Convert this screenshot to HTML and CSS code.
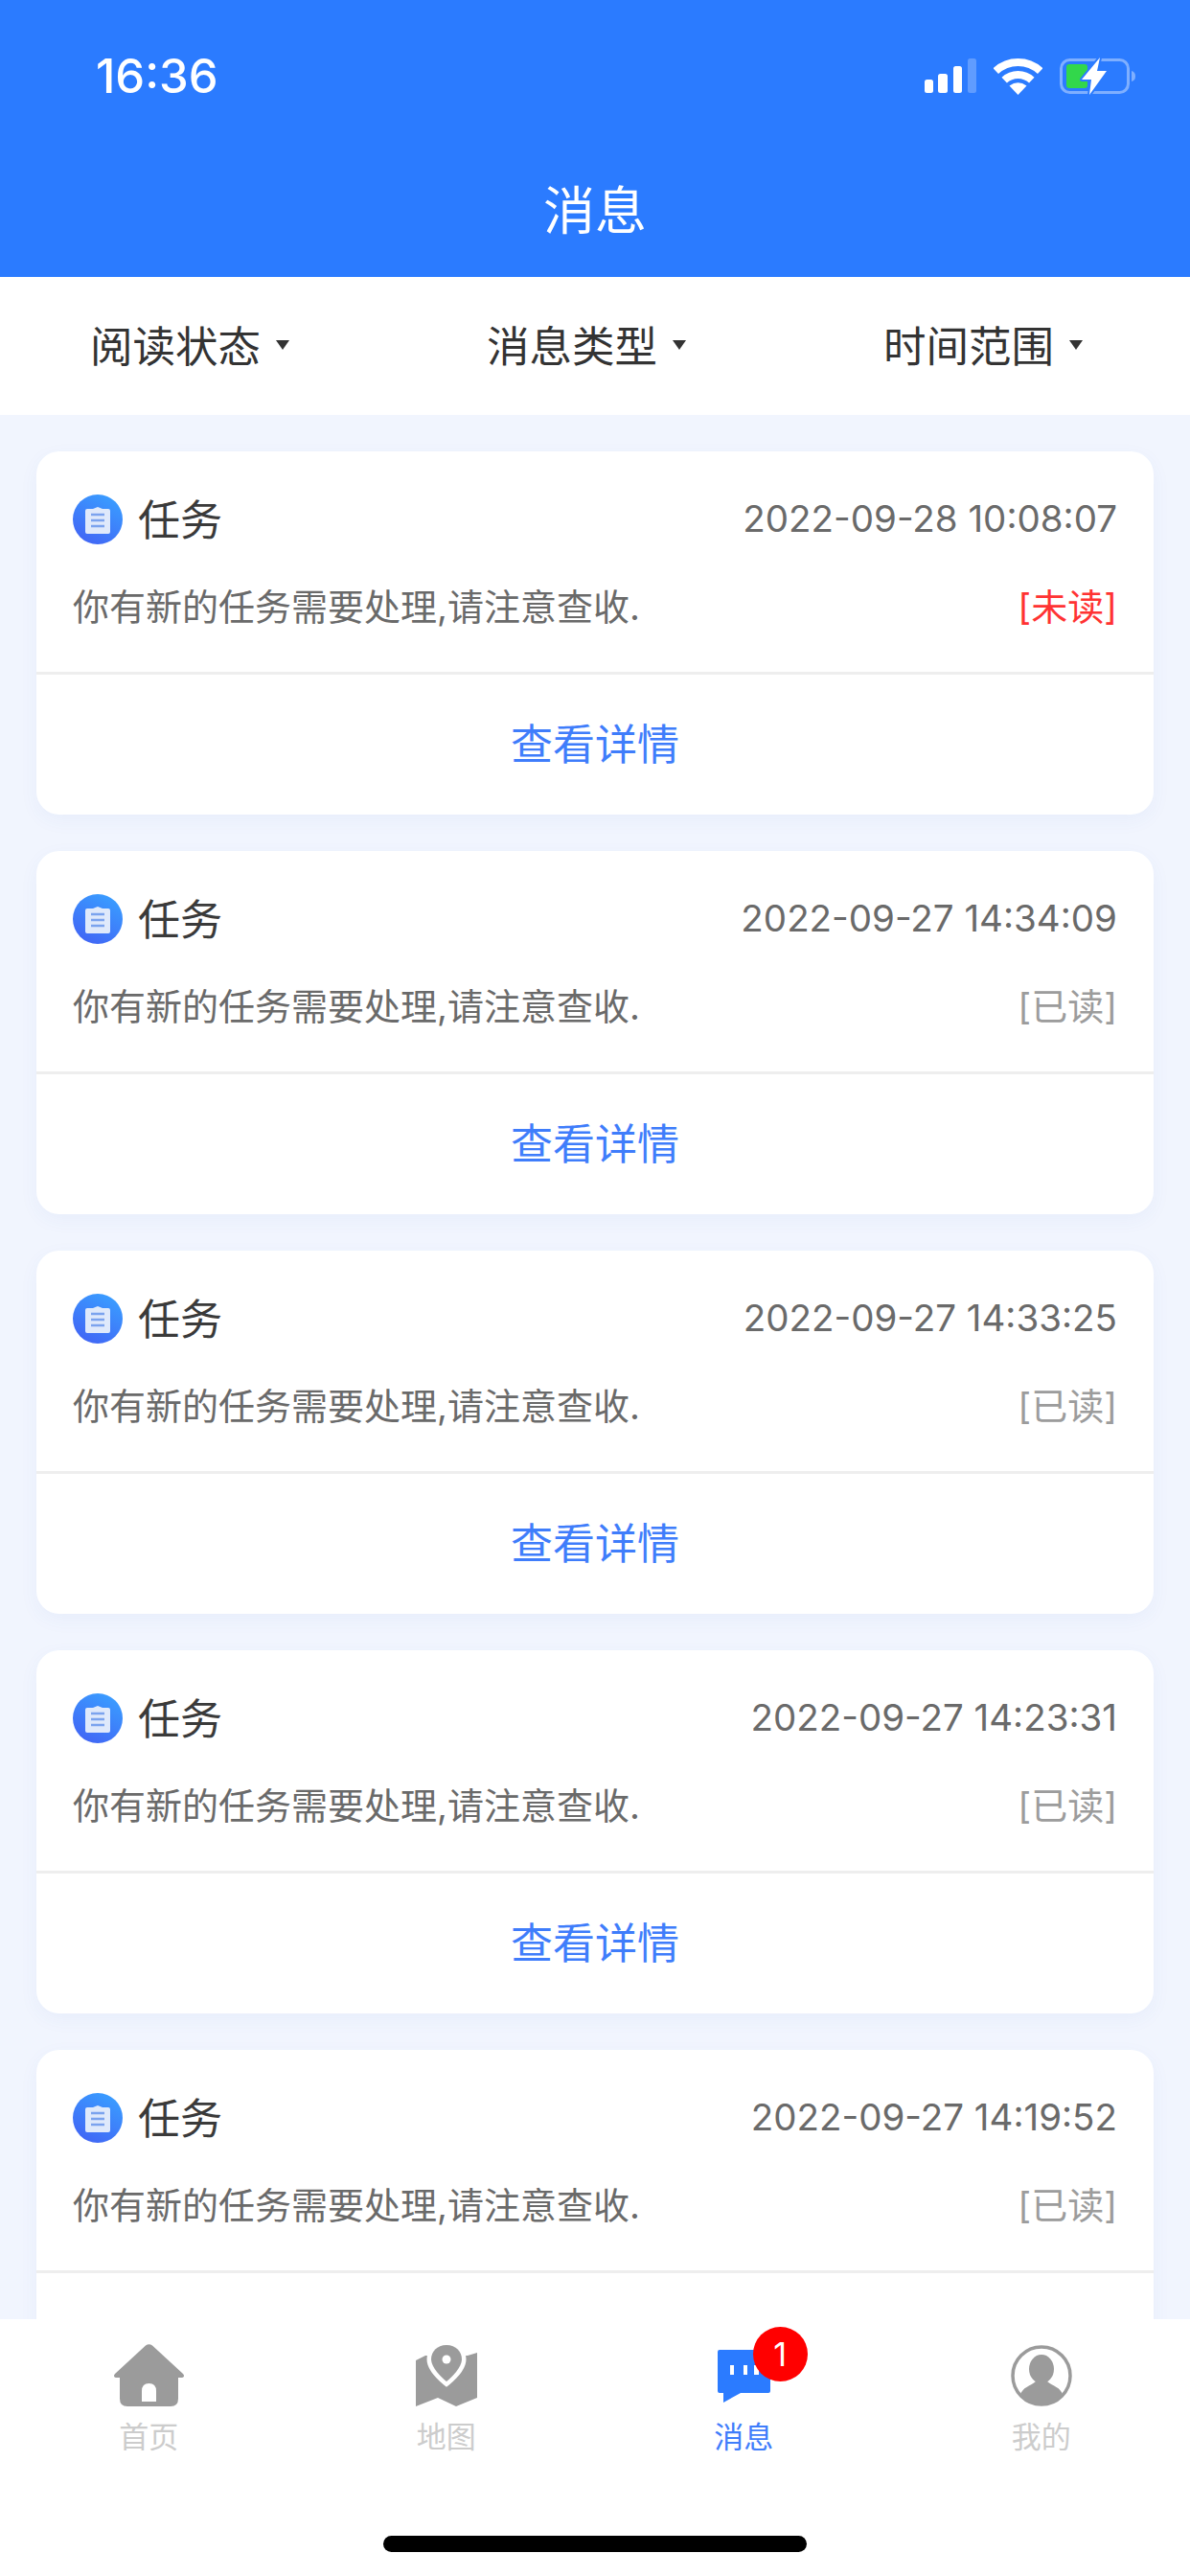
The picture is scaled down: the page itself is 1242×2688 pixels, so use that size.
FILE: index.html
```html
<!DOCTYPE html>
<html lang="zh-CN">
  <head>
    <meta charset="UTF-8" />
    <meta name="viewport" content="width=device-width, initial-scale=1.0" />
    <title>消息</title>
    <link rel="stylesheet" href="styles.css">
  </head>
  <body>
    <svg class="defs" width="0" height="0">
      <defs>
        <linearGradient id="taskBg" x1="0.8" y1="0.1" x2="0.3" y2="1">
          <stop offset="0" stop-color="#3a9bff" />
          <stop offset="1" stop-color="#4166f5" />
        </linearGradient>
        <symbol id="taskIcon" viewBox="0 0 52 52">
          <circle cx="26" cy="26" r="26" fill="url(#taskBg)" />
          <path d="M15 15h6l5-2 5 2h6q2 0 2 2v22q0 2-2 2H15q-2 0-2-2V17q0-2 2-2z" fill="#dfe9fb" />
          <path d="M19 21h14M19 27h14M19 33h14" stroke="#7ba3ee" stroke-width="2.6" />
        </symbol>
      </defs>
    </svg>

    <div class="page">
      <header class="header">
        <div class="status-bar">
          <span class="time">16:36</span>
          <div class="status-icons">
            <svg width="54" height="36" viewBox="0 0 54 36">
              <rect x="0" y="22" width="9" height="14" rx="2.5" fill="#fff" />
              <rect x="14" y="16" width="10" height="20" rx="2.5" fill="#fff" />
              <rect x="30" y="8" width="9" height="28" rx="2.5" fill="#fff" />
              <rect x="45" y="0" width="9" height="36" rx="2.5" fill="#fff" opacity="0.25" />
            </svg>
            <svg width="51" height="39" viewBox="0 0 51 39">
              <path d="M2.3 14.1A34 34 0 0 1 48.7 14.1M11.2 23.6A21 21 0 0 1 39.8 23.6" fill="none" stroke="#fff" stroke-width="8" />
              <path d="M25.5 39L16.5 29.5Q25.5 23 34.5 29.5Z" fill="#fff" />
            </svg>
            <svg width="80" height="41" viewBox="0 0 80 41">
              <rect x="1.5" y="3.5" width="70" height="34" rx="9" fill="none" stroke="#fff" stroke-opacity="0.4" stroke-width="3" />
              <path d="M75 15q4 1 4 5.500t-4 5.500z" fill="#fff" fill-opacity="0.4" />
              <rect x="7" y="8" width="22" height="25" rx="3" fill="#32d74b" />
              <path d="M42 1L23 24H33L31 40L49 15H39Z" fill="#fff" stroke="#2b7bff" stroke-width="4" paint-order="stroke" stroke-linejoin="round" />
            </svg>
          </div>
        </div>
        <h1 class="title">消息</h1>
      </header>

      <nav class="filters">
        <div class="filter">阅读状态<i class="caret"></i></div>
        <div class="filter">消息类型<i class="caret"></i></div>
        <div class="filter">时间范围<i class="caret"></i></div>
      </nav>

      <main class="list">
        <section class="card">
          <div class="card-top">
            <div class="row">
              <div class="kind"><svg class="kind-icon"><use href="#taskIcon" /></svg><span>任务</span></div>
              <span class="date">2022-09-28 10:08:07</span>
            </div>
            <div class="row msg-row">
              <span>你有新的任务需要处理,请注意查收.</span>
              <span class="unread">[未读]</span>
            </div>
          </div>
          <div class="detail">查看详情</div>
        </section>

        <section class="card">
          <div class="card-top">
            <div class="row">
              <div class="kind"><svg class="kind-icon"><use href="#taskIcon" /></svg><span>任务</span></div>
              <span class="date">2022-09-27 14:34:09</span>
            </div>
            <div class="row msg-row">
              <span>你有新的任务需要处理,请注意查收.</span>
              <span class="read">[已读]</span>
            </div>
          </div>
          <div class="detail">查看详情</div>
        </section>

        <section class="card">
          <div class="card-top">
            <div class="row">
              <div class="kind"><svg class="kind-icon"><use href="#taskIcon" /></svg><span>任务</span></div>
              <span class="date">2022-09-27 14:33:25</span>
            </div>
            <div class="row msg-row">
              <span>你有新的任务需要处理,请注意查收.</span>
              <span class="read">[已读]</span>
            </div>
          </div>
          <div class="detail">查看详情</div>
        </section>

        <section class="card">
          <div class="card-top">
            <div class="row">
              <div class="kind"><svg class="kind-icon"><use href="#taskIcon" /></svg><span>任务</span></div>
              <span class="date">2022-09-27 14:23:31</span>
            </div>
            <div class="row msg-row">
              <span>你有新的任务需要处理,请注意查收.</span>
              <span class="read">[已读]</span>
            </div>
          </div>
          <div class="detail">查看详情</div>
        </section>

        <section class="card">
          <div class="card-top">
            <div class="row">
              <div class="kind"><svg class="kind-icon"><use href="#taskIcon" /></svg><span>任务</span></div>
              <span class="date">2022-09-27 14:19:52</span>
            </div>
            <div class="row msg-row">
              <span>你有新的任务需要处理,请注意查收.</span>
              <span class="read">[已读]</span>
            </div>
          </div>
        </section>
      </main>

      <footer class="tabbar">
        <div class="tabs">
          <div class="tab">
            <div class="tab-icon">
              <svg width="73" height="65" viewBox="0 0 73 65">
                <path d="M33 1.500Q36.500-1 40 1.500L72 31Q74.500 34 71 35H67V57Q67 65 59 65H14Q6 65 6 57V35H2Q-1.500 34 1 31Z" fill="#9b9b9b" />
                <path d="M29 60V49Q29 41 36.500 41T44 49V60Z" fill="#fff" />
              </svg>
            </div>
            <span>首页</span>
          </div>
          <div class="tab">
            <div class="tab-icon">
              <svg width="64" height="64" viewBox="0 0 64 64">
                <path d="M0 16L10 11H54L64 8V55L42 64L23 55L0 64Z" fill="#9b9b9b" />
                <path d="M32 0C22 0 16 7 16 15C16 23 26 33 32 38C38 33 48 23 48 15C48 7 42 0 32 0Z" fill="#9b9b9b" stroke="#fff" stroke-width="9" paint-order="stroke" stroke-miterlimit="8" />
                <circle cx="32" cy="15" r="4.500" fill="#fff" />
              </svg>
            </div>
            <span>地图</span>
          </div>
          <div class="tab tab-active">
            <div class="tab-icon">
              <div class="msg-icon">
                <svg width="55" height="55" viewBox="0 0 55 55">
                  <path d="M2 0H53Q55 0 55 2V43Q55 45 53 45H24L6 55V45H2Q0 45 0 43V2Q0 0 2 0Z" fill="#2b7bff" />
                  <path d="M13 16h4v10h-4zM27 16h4v10h-4zM38 16h5v10h-5z" fill="#fff" />
                </svg>
                <b class="badge">1</b>
              </div>
            </div>
            <span>消息</span>
          </div>
          <div class="tab">
            <div class="tab-icon">
              <svg width="64" height="64" viewBox="0 0 64 64">
                <circle cx="32" cy="32" r="30" fill="none" stroke="#9b9b9b" stroke-width="3.500" />
                <ellipse cx="32" cy="25" rx="13" ry="15" fill="#9b9b9b" />
                <path d="M10 52C12 44 20 43 26 38H38C44 43 52 44 54 52C48 59 40 62 32 62C24 62 16 59 10 52Z" fill="#9b9b9b" />
              </svg>
            </div>
            <span>我的</span>
          </div>
        </div>
        <div class="home-bar"></div>
      </footer>
    </div>
  </body>
</html>
```

FILE: styles.css
```css
html,
body {
  margin: 0;
  padding: 0;
}
body {
  font-family: Inter, "Noto Sans CJK SC", sans-serif;
  color: #333;
  background-color: #fff;
}
.defs {
  display: block;
  height: 0;
}
.page {
  width: 1242px;
  height: 2688px;
  display: flex;
  flex-direction: column;
  overflow: hidden;
}

/* header */
.header {
  height: 289px;
  flex: none;
  background-color: #2b7bff;
  color: #fff;
}
.status-bar {
  height: 158px;
  box-sizing: border-box;
  padding: 0 56px 0 100px;
  display: flex;
  align-items: center;
  justify-content: space-between;
}
.time {
  font-size: 49px;
  font-weight: 500;
}
.status-icons {
  display: flex;
  align-items: center;
  gap: 18px;
}
.status-icons svg {
  display: block;
}
.title {
  margin: 0;
  height: 126px;
  line-height: 126px;
  font-size: 54px;
  font-weight: 400;
  text-align: center;
}

/* filters */
.filters {
  height: 144px;
  flex: none;
  display: grid;
  grid-template-columns: repeat(3, 1fr);
  background-color: #fff;
}
.filter {
  display: flex;
  align-items: center;
  justify-content: center;
  padding: 0 18px 5px 0;
  font-size: 44.5px;
  color: #333;
}
.caret {
  width: 0;
  height: 0;
  margin: 3px 0 0 16px;
  border-left: 7px solid transparent;
  border-right: 7px solid transparent;
  border-top: 10px solid #333;
}

/* message cards */
.list {
  flex: 1;
  min-height: 0;
  overflow: hidden;
  padding: 38px 38px 0;
  display: flex;
  flex-direction: column;
  gap: 38px;
  background-color: #f1f5fe;
}
.card {
  flex: none;
  height: 379px;
  background-color: #fff;
  border-radius: 24px;
  box-shadow: 0 6px 20px rgba(50, 90, 200, 0.05);
}
.card-top {
  height: 185px;
  padding: 45px 38px 0;
  border-bottom: 3px solid #eee;
}
.row {
  display: flex;
  align-items: center;
  justify-content: space-between;
  height: 52px;
}
.kind {
  display: flex;
  align-items: center;
  gap: 16px;
  font-size: 44px;
  color: #3a3a3a;
}
.kind span {
  padding-bottom: 4px;
}
.kind-icon {
  display: block;
  width: 52px;
  height: 52px;
}
.date {
  padding-bottom: 3px;
  font-size: 38.5px;
  color: #6a6a6a;
}
.msg-row {
  height: 56px;
  margin-top: 34px;
  font-size: 38px;
  color: #6a6a6a;
}
.unread {
  color: #f33;
}
.read {
  color: #9c9c9c;
}
.detail {
  height: 146px;
  line-height: 146px;
  text-align: center;
  font-size: 44px;
  color: #3f7dfb;
}

/* bottom tabs */
.tabbar {
  height: 268px;
  flex: none;
  background-color: #fff;
  display: flex;
  flex-direction: column;
  align-items: center;
}
.tabs {
  width: 100%;
  height: 226px;
  display: grid;
  grid-template-columns: repeat(4, 1fr);
}
.tab {
  display: flex;
  flex-direction: column;
  align-items: center;
  font-size: 31px;
  line-height: 31px;
  color: #ccc;
}
.tab-active {
  color: #3f7dfb;
}
.tab-icon {
  height: 65px;
  margin: 26px 0 16px;
  display: flex;
  align-items: flex-end;
}
.tab-icon svg {
  display: block;
}
.msg-icon {
  position: relative;
  width: 55px;
  height: 55px;
  margin-bottom: 4px;
}
.badge {
  position: absolute;
  left: 37px;
  top: -24px;
  width: 57px;
  height: 57px;
  line-height: 57px;
  border-radius: 50%;
  background-color: #f00;
  color: #fff;
  font-size: 34px;
  font-weight: 400;
  text-align: center;
}
.home-bar {
  width: 442px;
  height: 17px;
  border-radius: 9px;
  background-color: #000;
}
```
